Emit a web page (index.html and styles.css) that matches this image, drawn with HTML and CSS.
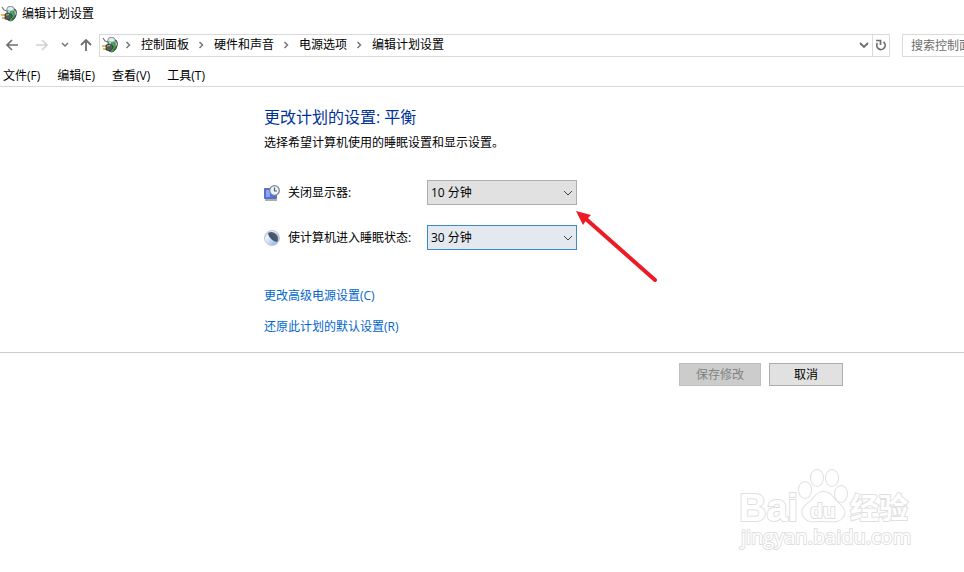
FILE: index.html
```html
<!DOCTYPE html>
<html lang="zh-CN">
<head>
    <meta charset="utf-8">
    <title>编辑计划设置</title>
    <link rel="stylesheet" href="styles.css">
</head>
<body>
    <!-- Shared icons -->
    <svg class="sprite" aria-hidden="true">
        <symbol id="power" viewBox="0 0 16 16">
            <path d="M1 1l2 3 3 1" stroke="#6f7572" stroke-width="1.2" fill="none"/>
            <path d="M6 3q0-2.500 3.500-2.500T13 3l.5 9q-1 3-4 3T6 12z" fill="#35ae4b" stroke="#4b5a50" stroke-width=".8"/>
            <path d="M6 3q0-2.500 3.500-2.500T13 3v1.500q-3 1-7 0z" fill="#e4eafa" stroke="#8a93a0" stroke-width=".7"/>
            <path d="M8 5v5" stroke="#9af09a" stroke-width="2"/>
            <path d="M13 3q3 1 2 5.500T11 13" fill="none" stroke="#4a4f4c" stroke-width="1.200"/>
            <path d="M0 9h4M1 12h4" stroke="#d9a61f" stroke-width="1.500"/>
            <path d="M4 8l4-1 3 2v2l-3 3-4-1z" fill="#55595a" stroke="#2c2f30" stroke-width=".7"/>
            <path d="M5 9l3-.5" stroke="#b8bcbc"/>
        </symbol>
        <symbol id="crumb" viewBox="0 0 8 8">
            <path d="M2 1l3 3-3 3" fill="none" stroke="#777" stroke-width="1.500"/>
        </symbol>
    </svg>

    <header class="titlebar">
        <svg class="app-icon" aria-hidden="true"><use href="#power"/></svg>
        <span>编辑计划设置</span>
    </header>

    <div class="toolbar">
        <button class="nav-button" type="button" aria-label="后退">
            <svg width="14" height="14" viewBox="0 0 14 14"><path d="M13 7H2M7 2L2 7l5 5" fill="none" stroke="#6d6d6d" stroke-width="1.600"/></svg>
        </button>
        <button class="nav-button" type="button" aria-label="前进" disabled>
            <svg width="14" height="14" viewBox="0 0 14 14"><path d="M1 7h11M7 2l5 5-5 5" fill="none" stroke="#d2d2d2" stroke-width="1.600"/></svg>
        </button>
        <button class="nav-button recent" type="button" aria-label="最近位置">
            <svg width="8" height="8" viewBox="0 0 8 8"><path d="M1 2l3 3 3-3" fill="none" stroke="#777" stroke-width="1.500"/></svg>
        </button>
        <button class="nav-button up" type="button" aria-label="上移">
            <svg width="14" height="14" viewBox="0 0 14 14"><path d="M7 13V2M2 7l5-5 5 5" fill="none" stroke="#6d6d6d" stroke-width="1.800"/></svg>
        </button>
        <div class="address">
            <svg class="app-icon" aria-hidden="true"><use href="#power"/></svg>
            <nav class="crumbs">
                <svg class="crumb"><use href="#crumb"/></svg>
                <a href="#">控制面板</a>
                <svg class="crumb"><use href="#crumb"/></svg>
                <a href="#">硬件和声音</a>
                <svg class="crumb"><use href="#crumb"/></svg>
                <a href="#">电源选项</a>
                <svg class="crumb"><use href="#crumb"/></svg>
                <a href="#">编辑计划设置</a>
            </nav>
            <button class="address-button" type="button" aria-label="以前的位置">
                <svg width="10" height="8" viewBox="0 0 10 8"><path d="M1 2l4 4 4-4" fill="none" stroke="#6d6d6d" stroke-width="1.800"/></svg>
            </button>
            <button class="address-button refresh" type="button" aria-label="刷新">
                <svg width="12" height="12" viewBox="0 0 12 12"><path d="M8.500 3A4.200 4.200 0 1 1 2.500 4" fill="none" stroke="#6d6d6d" stroke-width="1.700"/><path d="M1 1.500h4.500V6" fill="none" stroke="#6d6d6d" stroke-width="1.700"/></svg>
            </button>
        </div>
        <input class="search" type="text" placeholder="搜索控制面板" aria-label="搜索控制面板">
    </div>

    <nav class="menubar">
        <button type="button">文件(F)</button>
        <button type="button">编辑(E)</button>
        <button type="button">查看(V)</button>
        <button type="button">工具(T)</button>
    </nav>

    <main class="content">
        <h1>更改计划的设置: 平衡</h1>
        <p class="intro">选择希望计算机使用的睡眠设置和显示设置。</p>

        <div class="settings">
            <div class="setting">
                <svg width="16" height="16" viewBox="0 0 16 16" aria-hidden="true">
                    <path d="M.5 3.500h12v10H.5z" fill="#4b6eea" stroke="#6970a4"/>
                    <path d="M2 5h4v7H2z" fill="#89a5ff"/>
                    <path d="M1 15h12" stroke="#8f929b" stroke-width="1.500"/>
                    <circle cx="10.500" cy="5.500" r="4.800" fill="#edf3f7" stroke="#7d858d" stroke-width="1.300"/>
                    <path d="M10.500 2.500v3.500H13" fill="none" stroke="#536273" stroke-width="1.200"/>
                </svg>
                <label for="display">关闭显示器:</label>
                <div class="select-box">
                    <select id="display"><option>10 分钟</option></select>
                    <svg class="chevron" viewBox="0 0 10 6"><path d="M1 1l4 4 4-4" fill="none" stroke="#444"/></svg>
                </div>
            </div>
            <div class="setting">
                <svg width="16" height="16" viewBox="0 0 16 16" aria-hidden="true">
                    <defs>
                        <linearGradient id="moon" x1="0" y1="0" x2="1" y2="1">
                            <stop offset="0" stop-color="#9caebe"/>
                            <stop offset=".3" stop-color="#f1f7fc"/>
                            <stop offset="1" stop-color="#7ba5df"/>
                        </linearGradient>
                        <linearGradient id="shade" x1="1" y1="0" x2="0" y2="1">
                            <stop offset="0" stop-color="#656b72"/>
                            <stop offset=".6" stop-color="#40536f"/>
                            <stop offset="1" stop-color="#82a6d8"/>
                        </linearGradient>
                    </defs>
                    <circle cx="8" cy="8" r="7.500" fill="url(#moon)" stroke="#c2c9d1"/>
                    <path d="M4 3q5-3 9 2 2 4 0 7-3 0-6-3T4 3z" fill="url(#shade)"/>
                </svg>
                <label for="sleep">使计算机进入睡眠状态:</label>
                <div class="select-box">
                    <select id="sleep" class="active"><option>30 分钟</option></select>
                    <svg class="chevron" viewBox="0 0 10 6"><path d="M1 1l4 4 4-4" fill="none" stroke="#444"/></svg>
                </div>
            </div>
            <svg class="pointer" viewBox="0 0 82 72" aria-hidden="true">
                <path d="M10 9l69 61" stroke="#ed1c24" stroke-width="4" stroke-linecap="round"/>
                <path d="M0 1l15 4-4 4-4 6z" fill="#ed1c24"/>
            </svg>
        </div>

        <div class="links">
            <a href="#">更改高级电源设置(C)</a>
            <a href="#">还原此计划的默认设置(R)</a>
        </div>
    </main>

    <footer class="actions">
        <button class="save" type="button" disabled>保存修改</button>
        <button type="button">取消</button>
    </footer>

    <svg class="watermark" viewBox="0 0 180 90">
        <g fill="#fff" stroke="#dfdfdf" stroke-width="2">
            <text class="brand" x="7" y="54">Bai</text>
            <ellipse cx="73" cy="23" rx="6" ry="8"/>
            <ellipse cx="85" cy="11" rx="6" ry="8"/>
            <ellipse cx="100" cy="11" rx="6" ry="8"/>
            <ellipse cx="109" cy="27" rx="6" ry="8"/>
            <path d="M91 25c8 0 10 6 14 10 8 7 9 10 6 15-4 6-11 4-20 4s-14 2-19-4c-4-6-1-10 6-15 5-4 6-10 13-10z"/>
            <text class="du" x="78" y="51">du</text>
            <text class="jingyan" x="118" y="52">经验</text>
            <text class="site" x="9" y="77">jingyan.baidu.com</text>
        </g>
    </svg>
</body>
</html>
```

FILE: styles.css
```css
* {
    box-sizing: border-box;
}

body {
    position: relative;
    min-height: 100vh;
    margin: 0;
    overflow: hidden;
    background-color: #fff;
    color: #000;
    font: 12px/18px "Open Sans", "Noto Sans CJK SC", sans-serif;
}

button, input, select {
    margin: 0;
    color: inherit;
    font: inherit;
}

svg {
    display: block;
    flex-shrink: 0;
}

a {
    color: #0066cc;
    text-decoration: none;
}

.sprite {
    position: absolute;
    width: 0;
    height: 0;
}

.app-icon {
    width: 16px;
    height: 16px;
}

/* Title and address bars */
.titlebar {
    display: flex;
    align-items: center;
    gap: 5px;
    height: 28px;
    padding-left: 1px;
}

.toolbar {
    display: flex;
    align-items: center;
    height: 34px;
    padding-left: 5px;
}

.nav-button, .address-button {
    display: flex;
    align-items: center;
    justify-content: center;
    padding: 0;
    border: 0;
    background: none;
}

.nav-button {
    width: 14px;
    height: 22px;
    margin-right: 16px;
}

.nav-button.recent {
    width: 8px;
    margin: 0 10px 0 -4px;
}

.nav-button.up {
    margin-right: 6px;
}

.address {
    display: flex;
    flex: 1;
    align-items: center;
    height: 23px;
    padding-left: 2px;
    border: 1px solid #d9d9d9;
}

.crumbs {
    display: flex;
    flex: 1;
    align-items: center;
    gap: 8px;
    padding-left: 6px;
    white-space: nowrap;
}

.crumbs a {
    color: #000;
}

.crumb {
    width: 9px;
    height: 8px;
}

.address-button {
    width: 16px;
    height: 21px;
}

.address-button.refresh {
    width: 17px;
    border-left: 1px solid #d9d9d9;
}

.search {
    width: 62px;
    height: 23px;
    margin-left: 12px;
    padding: 0 0 0 8px;
    border: 1px solid #d9d9d9;
    border-right: 0;
    border-radius: 0;
}

.search::placeholder {
    color: #6d6d6d;
}

.menubar {
    display: flex;
    gap: 17px;
    height: 25px;
    padding: 3px 3px 0;
    border-bottom: 1px solid #d9d9d9;
}

.menubar button {
    padding: 0;
    border: 0;
    background: none;
}

/* Plan settings */
.content {
    padding: 18px 0 16px 264px;
}

h1 {
    margin: 0;
    color: #003399;
    font-size: 16px;
    font-weight: 400;
    line-height: 24px;
}

.intro {
    margin: 5px 0 28px;
}

.settings {
    position: relative;
    display: grid;
    gap: 20px;
}

.setting {
    display: grid;
    grid-template-columns: 16px 131px 150px;
    column-gap: 8px;
    align-items: center;
}

.select-box {
    display: grid;
    align-items: center;
}

.select-box select, .chevron {
    grid-area: 1 / 1;
}

.select-box select {
    height: 25px;
    padding: 0 20px 0 3px;
    border: 1px solid #adadad;
    border-radius: 0;
    background-color: #e1e1e1;
    appearance: none;
}

.select-box select.active {
    border-color: #3c8bc8;
    background-color: #e3e9ef;
}

.chevron {
    justify-self: end;
    width: 10px;
    height: 6px;
    margin-right: 4px;
    pointer-events: none;
}

.pointer {
    position: absolute;
    top: 30px;
    left: 312px;
    width: 82px;
    height: 72px;
}

.links {
    display: grid;
    justify-items: start;
    gap: 13px;
    margin-top: 37px;
}

.actions {
    display: flex;
    justify-content: flex-end;
    gap: 8px;
    padding: 10px 121px 0 0;
    border-top: 1px solid #ccc;
}

.actions button {
    width: 74px;
    height: 23px;
    padding: 0;
    border: 1px solid #adadad;
    background-color: #e1e1e1;
}

.actions .save {
    width: 82px;
    border-color: #bfbfbf;
    background-color: #ccc;
    color: #838383;
}

/* Site mark over the bottom corner */
.watermark {
    position: absolute;
    right: 52px;
    bottom: 15px;
    width: 180px;
    height: 90px;
    paint-order: stroke;
}

.watermark text {
    font-family: "Liberation Sans", "Noto Sans CJK SC", sans-serif;
    font-weight: 700;
}

.watermark .brand {
    font-size: 38px;
}

.watermark .du {
    font-size: 21px;
}

.watermark .jingyan {
    font-size: 29px;
}

.watermark .site {
    font-family: "Open Sans", sans-serif;
    font-size: 20px;
    font-weight: 400;
}
```
